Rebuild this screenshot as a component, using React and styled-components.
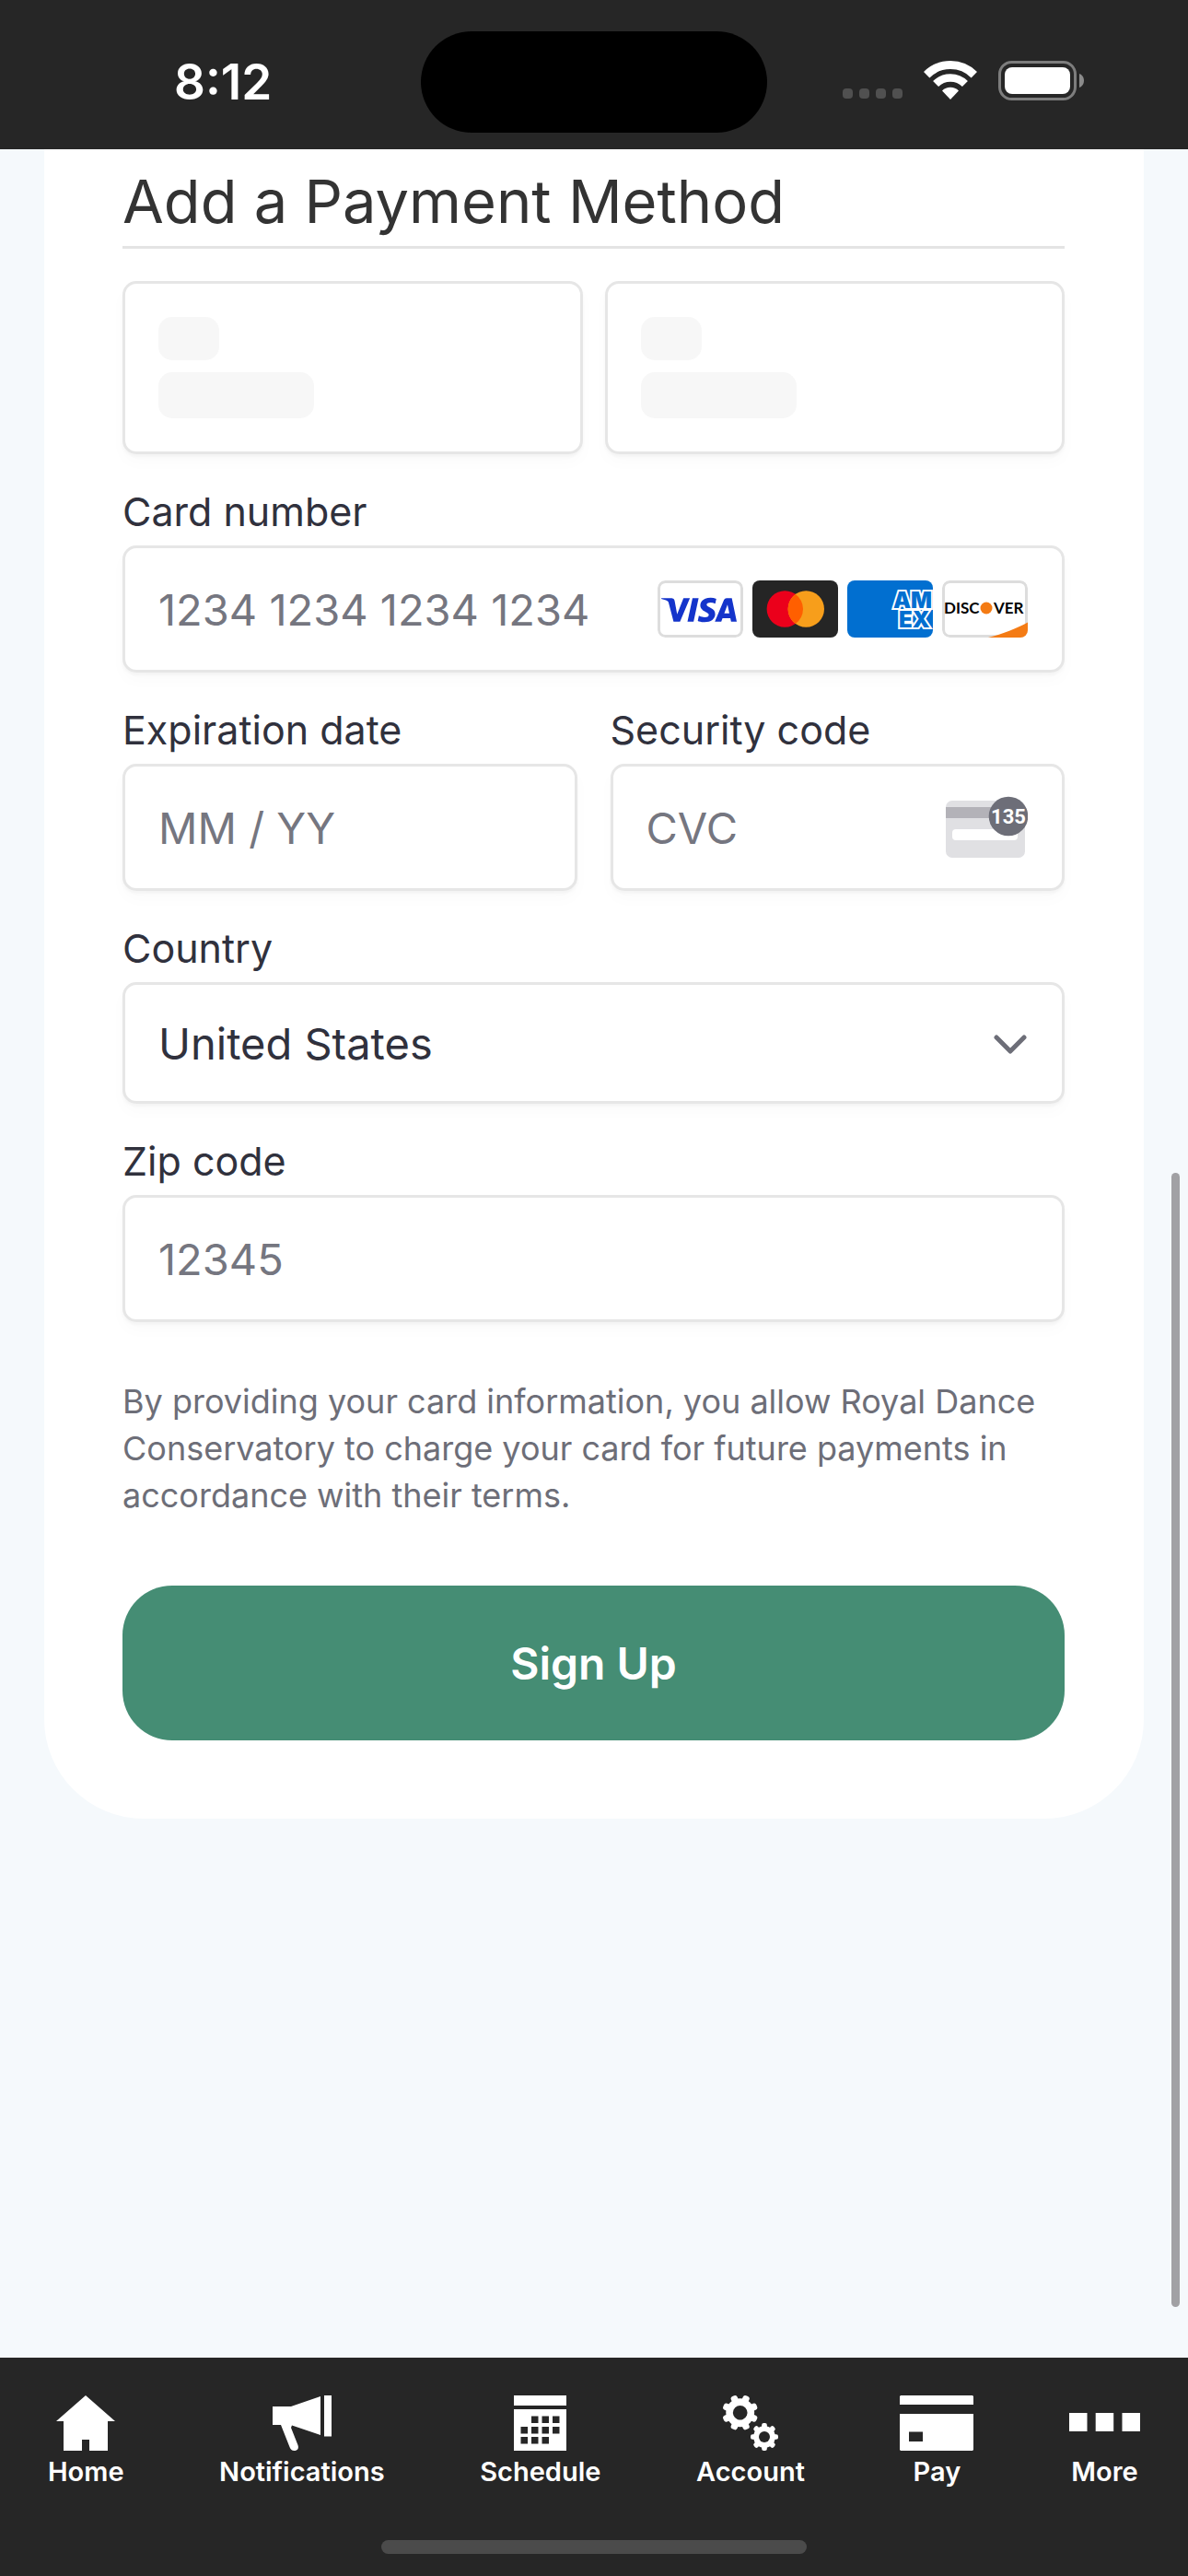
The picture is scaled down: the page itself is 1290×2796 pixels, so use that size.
import React from "react";
import styled, { createGlobalStyle } from "styled-components";
import { SiVisa } from "react-icons/si";

const GlobalStyle = createGlobalStyle`
  * {
    box-sizing: border-box;
  }

  body {
    margin: 0;
    background: #f5f9fc;
    font-family: Inter, "Liberation Sans", sans-serif;
  }
`;

const Page = styled.div`
  display: flex;
  flex-direction: column;
  min-height: 100vh;
`;

/* status bar */

const StatusBar = styled.header`
  display: grid;
  grid-template-columns: 1fr auto 1fr;
  align-items: center;
  height: 162px;
  padding-top: 16px;
  background: #262626;
  color: #fff;
`;

const Time = styled.time`
  padding-left: 189px;
  font-size: 53px;
  font-weight: 600;
  line-height: 60px;
`;

const Island = styled.div`
  width: 376px;
  height: 110px;
  border-radius: 55px;
  background: #000;
`;

const StatusIcons = styled.div`
  display: flex;
  justify-content: flex-end;
  align-items: flex-end;
  gap: 23px;
  padding: 0 113px 4px 0;

  svg {
    display: block;
  }
`;

/* card and form */

const Main = styled.main`
  position: relative;
  flex: 1;
  padding: 0 48px 48px;
`;

const Card = styled.section`
  padding: 17px 86px 85px 85px;
  border-radius: 0 0 108px 108px;
  background: #fff;
`;

const Title = styled.h1`
  margin: 0 0 35px;
  padding-bottom: 8px;
  border-bottom: 3px solid #e4e4e4;
  color: #333;
  font-size: 65px;
  font-weight: 400;
  line-height: 80px;
`;

const Form = styled.form`
  display: flex;
  flex-direction: column;
  gap: 36px;
`;

const Columns = styled.div`
  display: grid;
  grid-template-columns: 1fr 1fr;
  gap: ${props => props.$gap};
`;

const Box = styled.div`
  display: flex;
  border: 3px solid #e6e6e6;
  border-radius: 15px;
  background: #fff;
  box-shadow: 0 3px 3px rgba(0, 0, 0, 0.03), 0 9px 18px rgba(0, 0, 0, 0.02);
`;

const Tab = styled(Box)`
  flex-direction: column;
  gap: 13px;
  height: 188px;
  padding: 36px;
`;

const Bone = styled.div`
  width: ${props => props.$width};
  height: ${props => props.$height};
  border-radius: 15px;
  background: #f7f7f7;
`;

const Field = styled.div`
  display: flex;
  flex-direction: column;
  min-width: 0;
`;

const Label = styled.label`
  margin-bottom: 11px;
  color: #30313d;
  font-size: 43px;
  line-height: 52px;
`;

const Control = styled(Box)`
  position: relative;
  align-items: center;
  height: ${props => props.$height || "138px"};
  padding-right: 37px;
`;

const Input = styled.input`
  flex: 1;
  min-width: 0;
  height: 100%;
  padding: 0 0 0 36px;
  border: 0;
  outline: 0;
  background: none;
  color: #30313d;
  font: inherit;
  font-size: 47px;

  &::placeholder {
    color: #757680;
    opacity: 1;
  }
`;

const Select = styled.select`
  flex: 1;
  height: 100%;
  padding: 0 0 0 36px;
  border: 0;
  outline: 0;
  appearance: none;
  background: none;
  color: #30313d;
  font: inherit;
  font-size: 47px;
`;

const Brands = styled.div`
  display: flex;
  gap: 10px;
`;

const BrandSvg = styled.svg`
  display: block;
  width: 93px;
  height: 62px;
  border-radius: 8px;
`;

const AmexText = styled.text`
  fill: #016fd0;
  stroke: #fff;
  stroke-width: 4px;
  paint-order: stroke;
  font-size: 24px;
  font-weight: 900;
`;

const Terms = styled.p`
  margin: 25px 0 0;
  color: #6d6e78;
  font-size: 36px;
  line-height: 51px;
`;

const Submit = styled.button`
  height: 168px;
  margin-top: 36px;
  border: 0;
  border-radius: 54px;
  background: #458d74;
  color: #fff;
  font: inherit;
  font-size: 48px;
  font-weight: 600;
`;

const ScrollThumb = styled.div`
  position: absolute;
  top: 1111px;
  right: 9px;
  bottom: 55px;
  width: 9px;
  border-radius: 5px;
  background: #a1a1a4;
`;

/* bottom navigation */

const Footer = styled.footer`
  padding: 41px 52px 24px;
  background: #262626;
`;

const Nav = styled.nav`
  display: flex;
  justify-content: space-between;
`;

const NavLink = styled.a`
  display: flex;
  flex-direction: column;
  align-items: center;
  gap: 5px;
  color: #fff;
  font-size: 29px;
  font-weight: 600;
  line-height: 36px;
  text-decoration: none;

  svg {
    display: block;
    height: 60px;
    fill: #fff;
  }
`;

const HomeIndicator = styled.div`
  width: 462px;
  height: 15px;
  margin: 56px auto 0;
  border-radius: 8px;
  background: #4b4b4b;
`;

const SignalDots = () => (
  <svg width="65" height="13" fill="#505050">
    {[0, 18, 36, 54].map(x => (
      <rect key={x} x={x} width="11" height="11" rx="4" />
    ))}
  </svg>
);

const Wifi = () => (
  <svg width="58" height="43" viewBox="0 0 58 43" fill="none" stroke="#fff">
    <path d="M3.2 15.2A36.5 36.5 0 0 1 54.8 15.2" strokeWidth="9" />
    <path d="M13.1 25.1A22.5 22.5 0 0 1 44.9 25.1" strokeWidth="8.5" />
    <path d="M29 42L20 32.4A12.7 12.7 0 0 1 38 32.4Z" fill="#fff" stroke="none" />
  </svg>
);

const Battery = () => (
  <svg width="93" height="43" viewBox="0 0 93 43">
    <rect x="1.5" y="1.5" width="82" height="40" rx="13" fill="none" stroke="#7d7d7d" strokeWidth="3" />
    <rect x="7" y="7" width="71" height="29" rx="8" fill="#fff" />
    <path d="M88 14C91 15 93 18 93 21.5S91 28 88 29Z" fill="#8b8b8b" />
  </svg>
);

const Visa = () => (
  <BrandSvg viewBox="0 0 93 62" role="img" aria-label="Visa">
    <rect x="1.5" y="1.5" width="90" height="59" rx="7" fill="#fff" stroke="#ddd" strokeWidth="3" />
    <SiVisa x="4" y="-9" size={82} color="#1434cb" />
  </BrandSvg>
);

const Mastercard = () => (
  <BrandSvg viewBox="0 0 93 62" role="img" aria-label="Mastercard">
    <rect width="93" height="62" fill="#252525" />
    <circle cx="35.3" cy="31" r="19.7" fill="#eb001b" />
    <circle cx="58.3" cy="31" r="19.7" fill="#f79e1b" />
    <path d="M46.8 15A19.7 19.7 0 0 1 46.8 47A19.7 19.7 0 0 1 46.8 15Z" fill="#ff5f00" />
  </BrandSvg>
);

const Amex = () => (
  <BrandSvg viewBox="0 0 93 62" role="img" aria-label="American Express">
    <rect width="93" height="62" fill="#016fd0" />
    <AmexText>
      <tspan x="50" y="30">AM</tspan>
      <tspan x="56" y="51">EX</tspan>
    </AmexText>
  </BrandSvg>
);

const Discover = () => (
  <BrandSvg viewBox="0 0 93 62" role="img" aria-label="Discover">
    <rect x="1.5" y="1.5" width="90" height="59" rx="7" fill="#fff" stroke="#ddd" strokeWidth="3" />
    <path d="M50 62C66 58 81 52 93 45.5V62Z" fill="#f47b14" />
    <g fontFamily="Lato, sans-serif" fontSize="17" fontWeight="700">
      <text x="2" y="36">DISC</text>
      <text x="56" y="36">VER</text>
    </g>
    <circle cx="48" cy="30" r="6.5" fill="#f47b14" />
  </BrandSvg>
);

const CvcIcon = () => (
  <svg width="89" height="68" viewBox="0 0 89 68">
    <rect y="5" width="86" height="62" rx="7" fill="#e0e0e3" />
    <rect y="12" width="86" height="12" fill="#b3b2b8" />
    <rect x="7" y="36" width="71" height="12" rx="4" fill="#fff" />
    <circle cx="68" cy="22" r="21.3" fill="#6d6e78" />
    <text
      x="68"
      y="30"
      fill="#fff"
      fontFamily="Roboto, sans-serif"
      fontSize="22"
      fontWeight="700"
      textAnchor="middle"
    >
      135
    </text>
  </svg>
);

const Chevron = styled.svg`
  position: absolute;
  right: 38px;
  pointer-events: none;
`;

const HomeIcon = () => (
  <svg width="64" viewBox="0 0 64 60">
    <path d="M32 0L64 28H56V60H36V48H28V60H8V28H0Z" />
  </svg>
);

const MegaphoneIcon = () => (
  <svg width="64" viewBox="0 0 64 60">
    <path d="M0 12H20L52 1V43L21 32.5L20 35L27.5 54C29 58.5 26 60 23.5 60C21 60 19.5 58.5 18.5 56L9 32H0Z" />
    <rect x="56" width="8" height="44.5" />
  </svg>
);

const days = [
  [19, 22.5], [30.5, 22.5], [42, 22.5],
  [7.5, 34], [19, 34], [30.5, 34], [42, 34],
  [7.5, 45], [19, 45], [30.5, 45]
];

const CalendarIcon = () => (
  <svg width="57" viewBox="0 0 57 60">
    <rect width="57" height="11" />
    <rect y="15" width="57" height="45" />
    {days.map(([x, y]) => (
      <rect key={`${x}-${y}`} x={x} y={y} width="7.5" height="7.5" fill="#262626" />
    ))}
  </svg>
);

const Gear = ({ cx, cy, r, turn }) => (
  <g transform={`translate(${cx} ${cy}) rotate(${turn})`}>
    {[0, 45, 90, 135].map(angle => (
      <rect
        key={angle}
        x={-r * 0.19}
        y={-r}
        width={r * 0.38}
        height={r * 2}
        rx={r * 0.14}
        transform={`rotate(${angle})`}
      />
    ))}
    <circle r={r * 0.79} />
    <circle r={r * 0.4} fill="#262626" />
  </g>
);

const GearsIcon = () => (
  <svg width="60" viewBox="0 0 60 60">
    <Gear cx={18.7} cy={18.7} r={19.5} turn={22.5} />
    <Gear cx={45} cy={45} r={15} turn={0} />
  </svg>
);

const CardIcon = () => (
  <svg width="80" viewBox="0 0 80 60">
    <path d="M1 0H79L80 1V10H0V1Z" />
    <path d="M0 20H80V59L79 60H1L0 59Z" />
    <rect x="10" y="39.5" width="15" height="10.5" fill="#262626" />
  </svg>
);

const MoreIcon = () => (
  <svg width="77" viewBox="0 0 77 60">
    <rect y="19" width="19.5" height="20" />
    <rect x="28.7" y="19" width="19.5" height="20" />
    <rect x="57.5" y="19" width="19.5" height="20" />
  </svg>
);

const links = [
  { name: "Home", icon: HomeIcon },
  { name: "Notifications", icon: MegaphoneIcon },
  { name: "Schedule", icon: CalendarIcon },
  { name: "Account", icon: GearsIcon },
  { name: "Pay", icon: CardIcon },
  { name: "More", icon: MoreIcon }
];

const App = () => (
  <Page>
    <GlobalStyle />

    <StatusBar>
      <Time>8:12</Time>
      <Island />
      <StatusIcons>
        <SignalDots />
        <Wifi />
        <Battery />
      </StatusIcons>
    </StatusBar>

    <Main>
      <Card>
        <Title>Add a Payment Method</Title>
        <Form onSubmit={e => e.preventDefault()}>
          <Columns $gap="24px">
            {[0, 1].map(tab => (
              <Tab key={tab}>
                <Bone $width="66px" $height="47px" />
                <Bone $width="169px" $height="50px" />
              </Tab>
            ))}
          </Columns>

          <Field>
            <Label htmlFor="number">Card number</Label>
            <Control>
              <Input id="number" inputMode="numeric" placeholder="1234 1234 1234 1234" />
              <Brands>
                <Visa />
                <Mastercard />
                <Amex />
                <Discover />
              </Brands>
            </Control>
          </Field>

          <Columns $gap="36px">
            <Field>
              <Label htmlFor="expiry">Expiration date</Label>
              <Control>
                <Input id="expiry" inputMode="numeric" placeholder="MM / YY" />
              </Control>
            </Field>
            <Field>
              <Label htmlFor="cvc">Security code</Label>
              <Control>
                <Input id="cvc" inputMode="numeric" placeholder="CVC" />
                <CvcIcon />
              </Control>
            </Field>
          </Columns>

          <Field>
            <Label htmlFor="country">Country</Label>
            <Control $height="132px">
              <Select id="country" defaultValue="US">
                <option value="US">United States</option>
              </Select>
              <Chevron width="36" height="24" fill="none" stroke="#6d6e78" strokeWidth="5" strokeLinecap="round" strokeLinejoin="round">
                <path d="M3 6L18 21L33 6" />
              </Chevron>
            </Control>
          </Field>

          <Field>
            <Label htmlFor="zip">Zip code</Label>
            <Control>
              <Input id="zip" inputMode="numeric" placeholder="12345" />
            </Control>
          </Field>

          <Terms>
            By providing your card information, you allow Royal Dance
            Conservatory to charge your card for future payments in accordance
            with their terms.
          </Terms>
          <Submit type="submit">Sign Up</Submit>
        </Form>
      </Card>
      <ScrollThumb />
    </Main>

    <Footer>
      <Nav>
        {links.map(({ name, icon: Icon }) => (
          <NavLink key={name} href={`#${name.toLowerCase()}`}>
            <Icon />
            {name}
          </NavLink>
        ))}
      </Nav>
      <HomeIndicator />
    </Footer>
  </Page>
);

export default App;
